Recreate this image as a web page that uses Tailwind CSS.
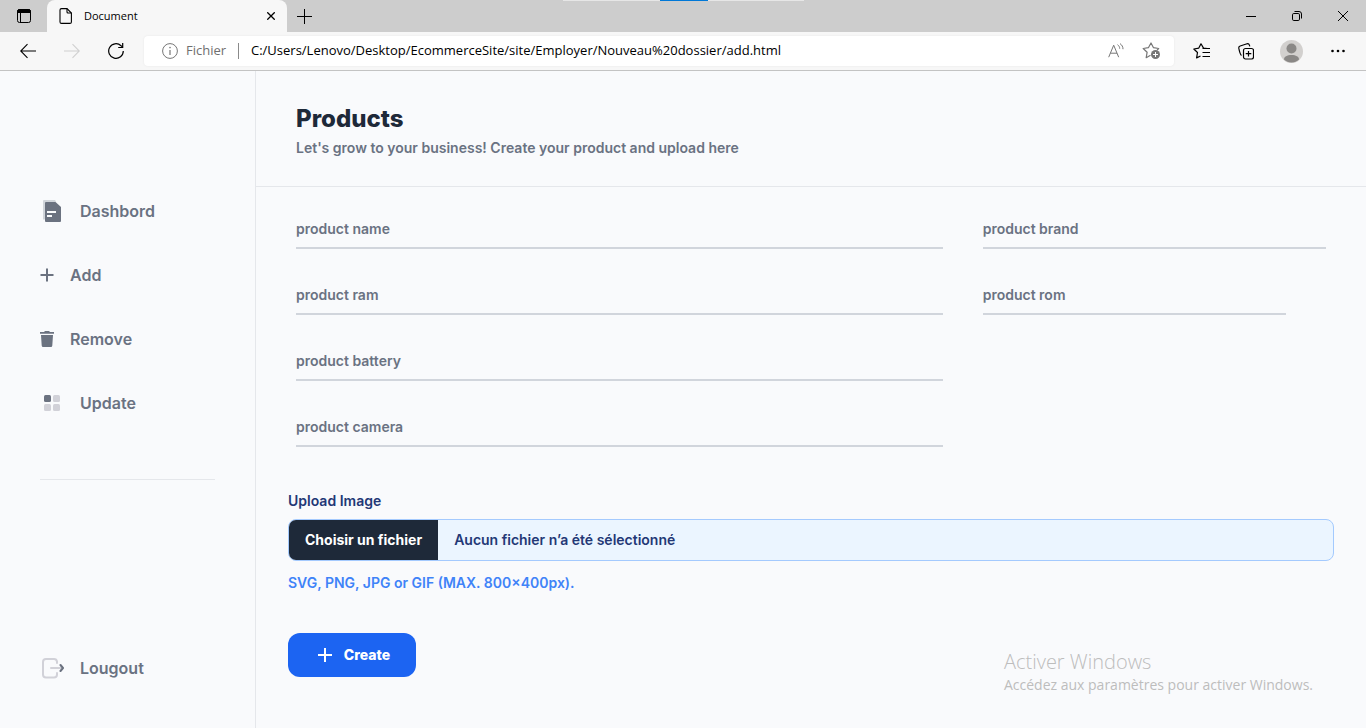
<!DOCTYPE html>
<html lang="fr">
<head>
<meta charset="utf-8">
<meta name="viewport" content="width=device-width, initial-scale=1">
<title>Document</title>
<script src="https://cdn.jsdelivr.net/npm/@tailwindcss/browser@4"></script>
</head>
<body class="relative flex min-h-screen flex-col bg-[#f9fafc] font-['Inter',sans-serif] text-gray-500">

<!-- Browser window -->
<header class="relative font-['Open_Sans',sans-serif] text-[13px] text-black">
  <div class="absolute top-0 left-[563px] flex h-px w-[241px] justify-center bg-[#e6e6e6]"><div class="h-px w-12 bg-[#0078d7]"></div></div>
  <div class="flex h-8 bg-[#cdcdcd]">
    <button class="flex w-[47px] items-center justify-center" aria-label="Onglets">
      <svg class="size-4" viewBox="0 0 16 16" fill="none" stroke="currentColor"><rect x="1.5" y="1.5" width="13" height="13" rx="2"/><path d="M1.5 4.5v-1a2 2 0 0 1 2-2h9a2 2 0 0 1 2 2v1z" fill="currentColor"/><path d="M4.5 4v10.500"/></svg>
    </button>
    <div class="flex w-60 items-center rounded-t-lg bg-[#f7f7f7] pr-2 pl-3">
      <svg class="h-4 w-3.5" viewBox="0 0 14 16" fill="none" stroke="currentColor" stroke-width="1.1"><path d="M2.500.6h5.500l4.400 4.400v8.900a1.500 1.500 0 0 1-1.500 1.500H2.500A1.500 1.500 0 0 1 1 13.900V2.100A1.500 1.500 0 0 1 2.500.6z"/><path d="M8 .8V4a1 1 0 0 0 1 1h3.300"/></svg>
      <span class="ml-[11px] flex-1 text-[11px]">Document</span>
      <button class="flex size-4 items-center justify-center" aria-label="Fermer l'onglet"><svg class="size-2" viewBox="0 0 8 8" stroke="currentColor" stroke-width="1.300"><path d="M.3.3l7.400 7.400M7.700.3L.3 7.700"/></svg></button>
    </div>
    <button class="flex w-[34px] items-center justify-center" aria-label="Nouvel onglet"><svg class="size-[15px]" viewBox="0 0 15 15" stroke="currentColor"><path d="M7.500 0v15M0 7.500h15"/></svg></button>
    <div class="ml-auto flex">
      <button class="flex w-[46px] items-center justify-center" aria-label="Réduire"><svg class="h-px w-2.5" viewBox="0 0 10 1"><path d="M0 0h10v1H0z"/></svg></button>
      <button class="flex w-[46px] items-center justify-center" aria-label="Restaurer"><svg class="size-2.5" viewBox="0 0 10 10" fill="none" stroke="currentColor"><rect x=".5" y="2.500" width="7" height="7" rx="1.300"/><path d="M2.500.5H7A2.500 2.500 0 0 1 9.500 3v4.500"/></svg></button>
      <button class="flex w-[46px] items-center justify-center" aria-label="Fermer"><svg class="size-2.5" viewBox="0 0 10 10" stroke="currentColor"><path d="M0 0l10 10M10 0L0 10"/></svg></button>
    </div>
  </div>
  <div class="flex h-[39px] items-center border-b border-[#c3c3c3] bg-[#f7f7f7] pl-5">
    <button class="mr-7 flex size-4 items-center" aria-label="Précédent"><svg class="size-4" viewBox="0 0 16 16" fill="none" stroke="currentColor" stroke-width="1.100"><path d="M16 8H.8M7.500 1.200L.7 8l6.800 6.800"/></svg></button>
    <button class="mr-7 flex size-4 items-center text-[#d0d0d0]" aria-label="Suivant" disabled><svg class="size-4" viewBox="0 0 16 16" fill="none" stroke="currentColor" stroke-width="1.100"><path d="M0 8h15.200M8.500 1.200L15.300 8l-6.800 6.800"/></svg></button>
    <button class="mr-5 flex size-4 items-center" aria-label="Actualiser"><svg class="size-4" viewBox="0 0 16 16" fill="none" stroke="currentColor" stroke-width="1.200"><path d="M15.300 8A7.300 7.300 0 1 1 13 2.700l1.500 1.500"/><path d="M14.700 0v4.500h-4.500"/></svg></button>
    <div class="flex h-[30px] flex-1 items-center rounded bg-white pr-3 pl-[18px] shadow-[0_0_2px_#e5e5e5]">
      <svg class="size-4 text-[#767676]" viewBox="0 0 16 16" fill="none" stroke="currentColor"><circle cx="8" cy="8" r="7.400"/><path d="M8 7v5" stroke-width="1.200"/><circle cx="8" cy="4.600" r=".8" fill="currentColor" stroke="none"/></svg>
      <span class="ml-2 w-11 text-[#6f6f6f]">Fichier</span>
      <span class="ml-2 h-4 w-px bg-[#8a8a8a]"></span>
      <input class="ml-3 min-w-0 flex-1 bg-transparent text-[13px] outline-none" type="text" aria-label="Adresse" value="C:/Users/Lenovo/Desktop/EcommerceSite/site/Employer/Nouveau%20dossier/add.html">
      <button class="mr-[18px] text-[#767676]" aria-label="Lecture à voix haute"><svg class="size-4" viewBox="0 0 16 16" fill="none" stroke="currentColor"><path d="M.7 14.200L5.700 2.200l5 12M2.400 10.200H9M9.500 1.700c1.500 1 2.200 2.300 2.200 4M12 .6c2 1.400 3 3.200 3 5.600"/></svg></button>
      <button class="text-[#767676]" aria-label="Ajouter aux favoris"><svg class="h-[18px] w-5" viewBox="0 0 20 18" fill="none" stroke="currentColor"><path d="M8.500 13.300L4.200 15.700l.9-5.400L1.200 6.500l5.200-.8L9 1l2.500 4.700 5.200.8-1.600 1.700" stroke-width="1.200" stroke-linejoin="round"/><circle cx="13.500" cy="12.500" r="4.500" fill="currentColor" stroke="none"/><path d="M13.500 10v5M11 12.500h5" stroke="#fff"/></svg></button>
    </div>
    <div class="flex w-48 items-center pl-[19px]">
      <button class="mr-7" aria-label="Favoris"><svg class="h-4 w-[17px]" viewBox="0 0 17 16" fill="none" stroke="currentColor" stroke-width="1.200" stroke-linejoin="round"><path d="M14.500 5.500l-4-.4L8 .8 5.800 5.100.8 6l3.700 3.500-.9 5.400L7.500 13M9.500 5.500H17M9.500 9.500H17M9.500 13.500H17"/></svg></button>
      <button class="mr-[26px]" aria-label="Collections"><svg class="h-[17px] w-4" viewBox="0 0 16 17" fill="none" stroke="currentColor" stroke-width="1.200"><rect x="5.500" y="5.500" width="10" height="10.500" rx="2"/><path d="M10.500 8v5.500M7.700 10.700h5.600M3.500 12.500C2 11.500 1.500 9 .8 5.200A2 2 0 0 1 2.200 3L9 .8a2 2 0 0 1 2.400 1.300l.4 1.300"/></svg></button>
      <button class="mr-7" aria-label="Profil"><svg class="size-[23px]" viewBox="0 0 23 23"><circle cx="11.500" cy="11.500" r="11.500" fill="#d2d0ce"/><circle cx="11.500" cy="8.500" r="5" fill="#8a8886"/><path d="M4 19.500c0-3 3-4.500 7.500-4.500s7.500 1.500 7.500 4.500c-2 2-4.500 3-7.500 3s-5.500-1-7.500-3z" fill="#8a8886"/></svg></button>
      <button aria-label="Paramètres"><svg class="h-1 w-3.5" viewBox="0 0 14 4"><circle cx="1.500" cy="2" r="1.300"/><circle cx="7" cy="2" r="1.300"/><circle cx="12.500" cy="2" r="1.300"/></svg></button>
    </div>
  </div>
</header>

<div class="flex flex-1">
  <!-- Sidebar -->
  <aside class="flex w-64 shrink-0 flex-col border-r border-gray-200 px-10 pt-32 pb-12 font-semibold">
    <nav class="flex flex-col gap-10">
      <a href="#" class="flex items-center gap-4">
        <svg class="size-6" viewBox="0 0 24 24"><path d="M3 2a1 1 0 0 1 1-1h11l1 1.500L5 20.500H3z" fill="#d1d5db"/><path d="M5 4a1 1 0 0 1 1-1h9.500L21 8v14a1 1 0 0 1-1 1H6a1 1 0 0 1-1-1z" fill="#6b7280"/><path d="M7 12h9v2H7zM7 16h5v2H7z" fill="#f9fafc"/></svg>
        Dashbord</a>
      <a href="#" class="flex items-center gap-4">
        <svg class="size-3.5" viewBox="0 0 14 14" stroke="#6b7280" stroke-width="2"><path d="M7 .5v13M.5 7h13"/></svg>
        Add</a>
      <a href="#" class="flex items-center gap-4">
        <svg class="h-[18px] w-3.5" viewBox="0 0 14 18" fill="#6b7280"><path d="M0 2h4l1-1h4l1 1h4v1.700H0zM1 5h12l-.7 10.500a1.500 1.500 0 0 1-1.500 1.500H3.200a1.500 1.500 0 0 1-1.500-1.500z"/></svg>
        Remove</a>
      <a href="#" class="flex items-center gap-4">
        <svg class="size-6" viewBox="0 0 24 24" fill="#d1d1d8"><rect x="4" y="4" width="7" height="7" rx="1.500" fill="#6b7280"/><rect x="13" y="4" width="7" height="7" rx="1.500"/><rect x="4" y="13" width="7" height="7" rx="1.500"/><rect x="13" y="13" width="7" height="7" rx="1.500"/></svg>
        Update</a>
    </nav>
    <hr class="mt-16 border-gray-200">
    <a href="#" class="mt-auto flex items-center gap-4">
      <svg class="size-6" viewBox="0 0 24 24" fill="none" stroke="#d1d1d8" stroke-width="2" stroke-linecap="round"><path d="M17 7V5.500A3 3 0 0 0 14 3H6A3 3 0 0 0 3 6v12.500a3 3 0 0 0 3 3h8a3 3 0 0 0 3-3V17"/><path d="M11 12h11"/><path d="M20.500 9l2.500 3-2.500 3" stroke="#6b7280" stroke-linejoin="round"/></svg>
      Lougout</a>
  </aside>

  <!-- Product form -->
  <main class="min-w-0 flex-1">
    <div class="border-b border-gray-200 px-10 pt-8 pb-7">
      <h1 class="text-2xl font-extrabold text-gray-800">Products</h1>
      <p class="mt-[3px] text-sm/5 font-semibold">Let's grow to your business! Create your product and upload here</p>
    </div>
    <form class="text-sm/5 font-semibold">
      <div class="flex px-10 pt-5">
        <div class="flex w-2/3 flex-col gap-6 pr-10">
          <div class="grid"><input id="name" type="text" class="col-start-1 row-start-1 h-[42px] border-b-2 border-gray-300 bg-transparent outline-none"><label for="name" class="col-start-1 row-start-1 pt-3">product name</label></div>
          <div class="grid"><input id="ram" type="text" class="col-start-1 row-start-1 h-[42px] border-b-2 border-gray-300 bg-transparent outline-none"><label for="ram" class="col-start-1 row-start-1 pt-3">product ram</label></div>
          <div class="grid"><input id="battery" type="text" class="col-start-1 row-start-1 h-[42px] border-b-2 border-gray-300 bg-transparent outline-none"><label for="battery" class="col-start-1 row-start-1 pt-3">product battery</label></div>
          <div class="grid"><input id="camera" type="text" class="col-start-1 row-start-1 h-[42px] border-b-2 border-gray-300 bg-transparent outline-none"><label for="camera" class="col-start-1 row-start-1 pt-3">product camera</label></div>
        </div>
        <div class="flex w-1/3 flex-col gap-6">
          <div class="grid"><input id="brand" type="text" class="col-start-1 row-start-1 h-[42px] border-b-2 border-gray-300 bg-transparent outline-none"><label for="brand" class="col-start-1 row-start-1 pt-3">product brand</label></div>
          <div class="grid pr-10"><input id="rom" type="text" class="col-start-1 row-start-1 h-[42px] border-b-2 border-gray-300 bg-transparent outline-none"><label for="rom" class="col-start-1 row-start-1 pt-3">product rom</label></div>
        </div>
      </div>
      <div class="px-8 pt-11">
        <label for="image" class="block text-[#233876]">Upload Image</label>
        <label for="image" class="relative mt-2 flex h-[42px] cursor-pointer items-center overflow-hidden rounded-lg border border-[#a4cafe] bg-[#ebf5ff] text-[#233876]">
          <input id="image" type="file" class="sr-only">
          <span class="flex h-full items-center bg-gray-800 px-4 font-bold text-white">Choisir un fichier</span>
          <span class="pl-4">Aucun fichier n’a été sélectionné</span>
        </label>
        <p class="mt-3 text-[#3f83f8]">SVG, PNG, JPG or GIF (MAX. 800x400px).</p>
        <button type="button" class="mt-10 flex h-11 w-32 items-center justify-center gap-3 rounded-xl bg-[#1c64f2] pl-1 font-extrabold text-white">
          <svg class="size-3.5" viewBox="0 0 14 14" stroke="currentColor" stroke-width="2"><path d="M7 0v14M0 7h14"/></svg>
          Create</button>
      </div>
    </form>
  </main>
</div>

<!-- Windows activation watermark -->
<div class="pointer-events-none absolute right-[53px] bottom-[33px] font-['Open_Sans',sans-serif] text-[#bdbdbd]">
  <p class="text-xl/6 font-light">Activer Windows</p>
  <p class="mt-px text-sm/5">Accédez aux paramètres pour activer Windows.</p>
</div>
</body>
</html>
